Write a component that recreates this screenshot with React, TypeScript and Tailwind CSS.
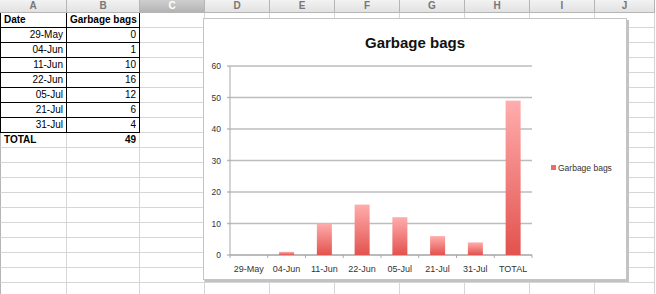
const columns = [
  { label: "A", width: 67 },
  { label: "B", width: 73 },
  { label: "C", width: 65, selected: true },
  { label: "D", width: 65 },
  { label: "E", width: 65 },
  { label: "F", width: 65 },
  { label: "G", width: 65 },
  { label: "H", width: 65 },
  { label: "I", width: 65 },
  { label: "J", width: 60 },
];

const data = [
  { date: "29-May", bags: 0 },
  { date: "04-Jun", bags: 1 },
  { date: "11-Jun", bags: 10 },
  { date: "22-Jun", bags: 16 },
  { date: "05-Jul", bags: 12 },
  { date: "21-Jul", bags: 6 },
  { date: "31-Jul", bags: 4 },
];

const total = data.reduce((s, d) => s + d.bags, 0);
const emptyRows = Array.from({ length: 10 });

function Cell({ width, children, className = "" }: { width: number; children?: React.ReactNode; className?: string }) {
  return (
    <div
      style={{ width }}
      className={`h-[15px] shrink-0 border-r border-b border-[#d6d6d6] px-[3px] leading-[14px] overflow-hidden whitespace-nowrap ${className}`}
    >
      {children}
    </div>
  );
}

function BlankCells({ from }: { from: number }) {
  return (
    <>
      {columns.slice(from).map((c) => (
        <Cell key={c.label} width={c.width} />
      ))}
    </>
  );
}

function Chart() {
  const x0 = 26;
  const x1 = 328;
  const top = 47;
  const bottom = 236;
  const perUnit = (bottom - top) / 60;
  const slot = (x1 - x0) / 8;
  const bars = [...data, { date: "TOTAL", bags: total }];

  return (
    <div className="absolute left-[203px] top-[18px] w-[424px] h-[262px] bg-white border border-[#c4c4c4] shadow-[2px_2px_0_#c2c2c2]">
      <svg width="424" height="262" className="block" style={{ fontFamily: '"Liberation Sans", Arial, sans-serif' }}>
        <defs>
          <linearGradient id="bar" x1="0" y1="0" x2="0" y2="1">
            <stop offset="0" stopColor="#ffadad" />
            <stop offset="1" stopColor="#e2524e" />
          </linearGradient>
        </defs>
        <text x="211" y="29" textAnchor="middle" fontSize="15" fontWeight="bold" fill="#111">
          Garbage bags
        </text>
        {[0, 10, 20, 30, 40, 50, 60].map((v) => {
          const y = bottom - v * perUnit;
          return (
            <g key={v}>
              <line x1={x0 - 3} x2={x1} y1={y} y2={y} stroke="#bdbdbd" strokeWidth="1.3" />
              <text x="17" y={y + 3} textAnchor="end" fontSize="8.5" fill="#333">
                {v}
              </text>
            </g>
          );
        })}
        <line x1={x0} x2={x0} y1={top} y2={bottom} stroke="#a8a8a8" strokeWidth="1" />
        <line x1={x0} x2={x1} y1={bottom} y2={bottom} stroke="#a8a8a8" strokeWidth="1" />
        {Array.from({ length: 9 }).map((_, i) => (
          <line key={i} x1={x0 + i * slot} x2={x0 + i * slot} y1={bottom} y2={bottom + 3} stroke="#a8a8a8" />
        ))}
        {bars.map((b, i) => {
          const cx = x0 + slot * (i + 0.5);
          const h = b.bags * perUnit;
          return (
            <g key={b.date}>
              {h > 0 && <rect x={cx - 7.5} y={bottom - h} width="15" height={h} fill="url(#bar)" />}
              <text x={cx} y="253" textAnchor="middle" fontSize="9" fill="#333">
                {b.date}
              </text>
            </g>
          );
        })}
        <rect x="347" y="146" width="5" height="5" fill="#ec6b67" />
        <text x="354" y="152" fontSize="8.5" fill="#333">
          Garbage bags
        </text>
      </svg>
    </div>
  );
}

export default function App() {
  return (
    <div
      className="relative w-[656px] h-[294px] overflow-hidden bg-white text-[10px] text-black"
      style={{ fontFamily: '"Liberation Sans", Arial, sans-serif' }}
    >
      {/* column headers */}
      <div className="flex h-[13px]">
        {columns.map((c) => (
          <div
            key={c.label}
            style={{ width: c.width }}
            className={`shrink-0 border-r border-b border-[#b5b5b5] text-center font-bold leading-[12px] text-[10px] ${
              c.selected
                ? "bg-gradient-to-b from-[#cfcfcf] to-[#b4b4b4] text-white"
                : "bg-gradient-to-b from-[#f2f2f2] to-[#e2e2e2] text-[#777]"
            }`}
          >
            {c.label}
          </div>
        ))}
      </div>

      {/* header row */}
      <div className="flex">
        <Cell width={67} className="font-bold border-l border-l-black !border-r-black !border-b-black">
          Date
        </Cell>
        <Cell width={73} className="font-bold !border-r-black !border-b-black">
          Garbage bags
        </Cell>
        <BlankCells from={2} />
      </div>

      {data.map((d) => (
        <div key={d.date} className="flex">
          <Cell width={67} className="text-right border-l border-l-black !border-r-black !border-b-black">
            {d.date}
          </Cell>
          <Cell width={73} className="text-right !border-r-black !border-b-black">
            {d.bags}
          </Cell>
          <BlankCells from={2} />
        </div>
      ))}

      <div className="flex">
        <Cell width={67} className="font-bold border-l border-l-[#b5b5b5]">
          TOTAL
        </Cell>
        <Cell width={73} className="font-bold text-right">
          {total}
        </Cell>
        <BlankCells from={2} />
      </div>

      {emptyRows.map((_, i) => (
        <div key={i} className="flex">
          <Cell width={67} className="border-l border-l-[#b5b5b5]" />
          <BlankCells from={1} />
        </div>
      ))}

      <Chart />
    </div>
  );
}
